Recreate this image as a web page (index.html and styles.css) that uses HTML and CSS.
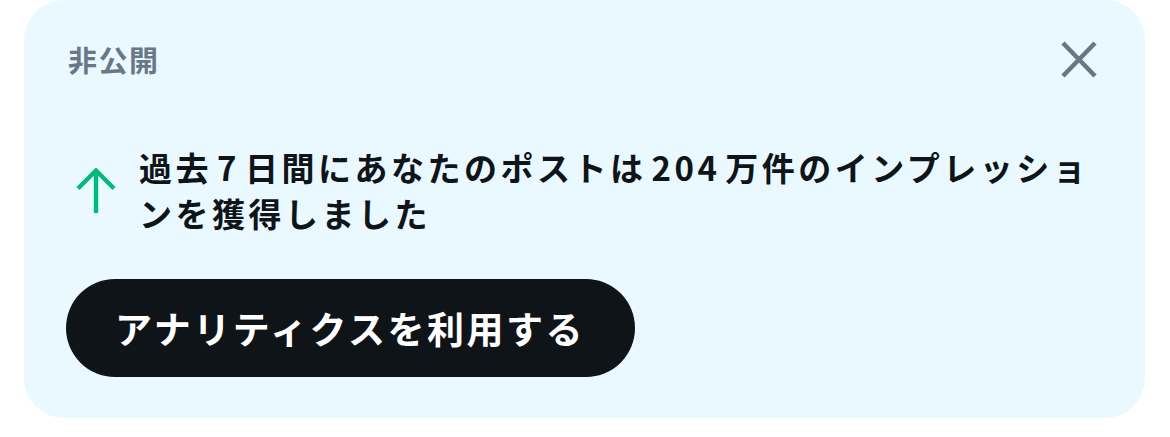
FILE: index.html
```html
<!DOCTYPE html>
<html lang="ja">
<head>
<meta charset="utf-8">
<link rel="stylesheet" href="styles.css">
</head>
<body>
<div class="card">
  <div class="header">
    <span class="label">非公開</span>
    <button class="close" aria-label="閉じる">
      <svg viewBox="0 0 40 40" width="40" height="40"><path d="M4 4 L36 37 M36 4 L4 37" stroke="#687785" stroke-width="4.5" fill="none"/></svg>
    </button>
  </div>
  <div class="message">
    <div class="icon">
      <svg viewBox="0 0 40 48" width="40" height="48"><path d="M20 5 V47 M2 22.5 L20 4.5 L38 22.5" stroke="#00ba7c" stroke-width="4.4" fill="none"/></svg>
    </div>
    <p class="text">過去 7 日間にあなたのポストは 204 万件のインプレッションを獲得しました</p>
  </div>
  <button class="cta">アナリティクスを利用する</button>
</div>
</body>
</html>
```

FILE: styles.css
```css
html, body {
  margin: 0;
  padding: 0;
  background: #ffffff;
}
body {
  font-family: "Noto Sans CJK JP", "Noto Sans", sans-serif;
}
.card {
  margin-left: 24px;
  width: 1121px;
  height: 418px;
  box-sizing: border-box;
  background: #eaf8ff;
  border-radius: 40px;
  padding: 39px 46px 0 44px;
}
.header {
  display: flex;
  justify-content: space-between;
  align-items: center;
  height: 40px;
}
.label {
  font-size: 29px;
  font-weight: 700;
  color: #687886;
  line-height: 40px;
  letter-spacing: 1.5px;
}
.close {
  border: 0;
  background: none;
  padding: 0;
  width: 40px;
  height: 40px;
  display: flex;
}
.message {
  display: flex;
  align-items: center;
  margin-top: 65px;
  gap: 16px;
}
.icon {
  width: 55px;
  display: flex;
  justify-content: center;
  flex-shrink: 0;
}
.text {
  margin: 0;
  font-size: 33px;
  font-weight: 700;
  line-height: 46px;
  color: #0f1419;
  letter-spacing: 3.5px;
  word-spacing: -6px;
  padding-right: 2px;
}
.cta {
  margin-top: 43px;
  border: 0;
  background: #0f1419;
  color: #ffffff;
  height: 98px;
  padding: 0 50px 0 49px;
  border-radius: 49px;
  font-family: "Noto Sans CJK JP", "Noto Sans", sans-serif;
  font-size: 37px;
  font-weight: 700;
  letter-spacing: 2.5px;
  margin-left: -2px;
}
```
